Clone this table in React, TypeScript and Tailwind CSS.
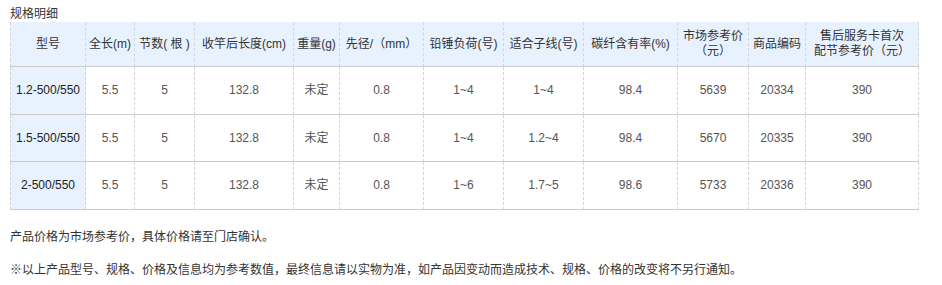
import React from 'react';

// column widths measured off the table, left to right
const cols = [
  'w-[76px]', 'w-[49px]', 'w-[60px]', 'w-[99px]', 'w-[46px]', 'w-[84px]',
  'w-[80px]', 'w-[80px]', 'w-[94px]', 'w-[71px]', 'w-[57px]', 'w-[113px]',
];

const headers: React.ReactNode[] = [
  '型号',
  '全长(m)',
  '节数( 根 )',
  '收竿后长度(cm)',
  '重量(g)',
  '先径/（mm）',
  '铅锤负荷(号)',
  '适合子线(号)',
  '碳纤含有率(%)',
  <>市场参考价<br />（元）</>,
  '商品编码',
  <>售后服务卡首次<br />配节参考价（元）</>,
];

const rows = [
  ['1.2-500/550', '5.5', '5', '132.8', '未定', '0.8', '1~4', '1~4', '98.4', '5639', '20334', '390'],
  ['1.5-500/550', '5.5', '5', '132.8', '未定', '0.8', '1~4', '1.2~4', '98.4', '5670', '20335', '390'],
  ['2-500/550', '5.5', '5', '132.8', '未定', '0.8', '1~6', '1.7~5', '98.6', '5733', '20336', '390'],
];

const cell =
  'text-center align-middle whitespace-nowrap px-0 border-r border-b border-dashed [border-bottom-style:solid] border-r-[#d4d4d4] border-b-[#cccccc]';

export default function App() {
  return (
    <div className="w-[942px] h-[285px] bg-white text-[12px] text-[#333] font-['Liberation_Sans',Arial,'Noto_Sans_CJK_SC',sans-serif]">
      <div className="pl-[10px] pt-[6px] h-[22px] leading-4">规格明细</div>

      <table className="ml-[10px] table-fixed border-separate border-spacing-0 w-[909px]">
        <colgroup>
          {cols.map((c, i) => (
            <col key={i} className={c} />
          ))}
        </colgroup>
        <thead>
          <tr>
            {headers.map((h, i) => (
              <th
                key={i}
                className={`${cell} h-[45px] bg-[#e8f2ff] font-normal text-[#333] leading-[15px] ${i === 0 ? 'border-l border-l-[#d4d4d4]' : ''}`}
              >
                {h}
              </th>
            ))}
          </tr>
        </thead>
        <tbody>
          {rows.map((r, ri) => (
            <tr key={ri}>
              {r.map((c, ci) => (
                <td
                  key={ci}
                  className={`${cell} h-[47.5px] ${ci === 0 ? 'bg-[#e8f2ff] text-[#222] border-l border-l-[#d4d4d4]' : 'bg-white text-[#555]'}`}
                >
                  {c}
                </td>
              ))}
            </tr>
          ))}
        </tbody>
      </table>

      <p className="pl-[10px] mt-[19px] leading-4">产品价格为市场参考价，具体价格请至门店确认。</p>
      <p className="pl-[10px] mt-[17px] leading-4">
        ※以上产品型号、规格、价格及信息均为参考数值，最终信息请以实物为准，如产品因变动而造成技术、规格、价格的改变将不另行通知。
      </p>
    </div>
  );
}
